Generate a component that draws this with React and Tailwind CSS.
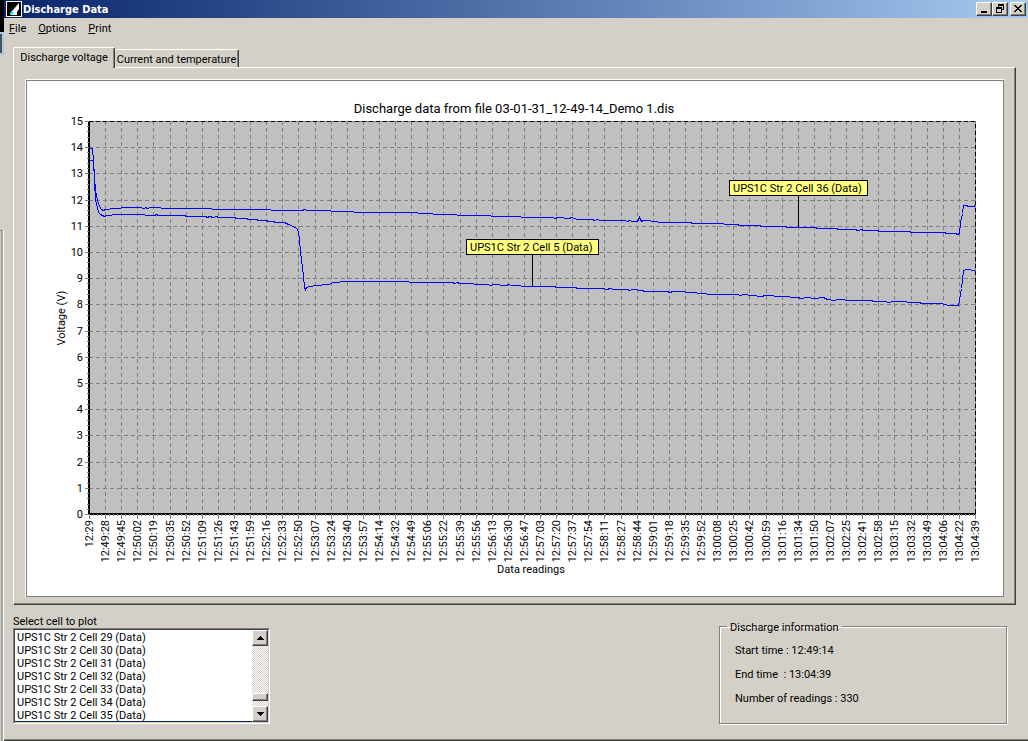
import React from "react";

const TIMES = [
  "12:29", "12:49:28", "12:49:45", "12:50:02", "12:50:19", "12:50:35", "12:50:52", "12:51:09",
  "12:51:26", "12:51:43", "12:51:59", "12:52:16", "12:52:33", "12:52:50", "12:53:07", "12:53:24",
  "12:53:40", "12:53:57", "12:54:14", "12:54:32", "12:54:49", "12:55:06", "12:55:22", "12:55:39",
  "12:55:56", "12:56:13", "12:56:30", "12:56:47", "12:57:03", "12:57:20", "12:57:37", "12:57:54",
  "12:58:11", "12:58:27", "12:58:44", "12:59:01", "12:59:18", "12:59:35", "12:59:52", "13:00:08",
  "13:00:25", "13:00:42", "13:00:59", "13:01:16", "13:01:34", "13:01:50", "13:02:07", "13:02:25",
  "13:02:41", "13:02:58", "13:03:15", "13:03:32", "13:03:49", "13:04:06", "13:04:22", "13:04:39",
];

const LEFT = 89;
const RIGHT = 975;
const TOP = 121;
const BOTTOM = 514;
const xAt = (i) => Math.round(LEFT + ((RIGHT - LEFT) * i) / 55);
const yAt = (v) => Math.round(BOTTOM - ((BOTTOM - TOP) * v) / 15);

const CELL_36 =
  "89,148 92,148 93,160 94,176 95,190 97,200 99,206 101,209 103,210 105,209 109,209 110,208 120,208 121,207 141,207 142,208 144,208 145,207 147,208 150,207 160,207 161,208 211,208 212,209 270,209 271,210 302,210 304,209 307,210 330,210 331,211 375,212 410,212 440,214 456,214 457,215 490,215 491,216 520,216 521,217 552,217 555,218 557,217 569,218 571,217 577,219 592,219 594,220 597,219 600,220 624,220 627,221 629,220 632,221 637,221 639,217 641,221 643,220 657,221 658,222 690,222 692,223 710,223 737,224 739,225 759,225 761,226 785,226 787,227 815,227 817,228 836,228 838,229 854,229 858,230 861,229 863,230 877,230 879,231 909,231 911,232 944,232 946,233 955,233 957,234 959,233 960,222 962,213 963,205 966,205 968,206 973,206 975,205";
const CELL_5 =
  "89,160 93,160 94,180 95,200 97,207 98,212 100,214 102,215 104,216 106,215 111,215 112,214 144,214 145,215 154,215 156,214 158,215 184,215 186,216 205,216 207,217 209,216 213,217 216,216 218,217 234,217 236,218 246,218 248,219 256,219 258,220 266,220 268,221 273,221 275,222 284,222 288,224 293,226 296,228 298,231 299,240 300,250 301,260 303,275 304,287 305,289 306,287 309,286 316,285 328,284 333,282 347,281 405,281 412,282 452,282 454,283 457,282 459,283 487,284 490,285 493,284 506,285 508,284 511,285 513,285 528,286 554,286 556,287 575,287 577,288 603,288 606,289 610,288 613,289 627,289 629,290 632,289 642,290 644,291 667,291 669,292 673,291 695,292 698,293 714,294 737,294 740,295 743,294 761,296 765,295 782,296 797,297 801,298 806,297 815,298 823,297 827,299 834,300 837,299 851,300 871,300 873,301 885,301 888,302 894,301 918,302 922,303 927,303 941,303 944,304 949,305 958,305 960,294 961,288 963,270 966,269 975,270";

function Chart() {
  const minorX = [];
  for (let x = LEFT + 4; x < RIGHT; x += 4) minorX.push(x);
  const minorY = [];
  for (let v = 0; v <= 75; v++) minorY.push(yAt(v / 5));
  return (
    <svg
      viewBox="27 81 976 515"
      role="img"
      aria-label="Discharge voltage chart"
      className="block h-auto w-full bg-white text-[11px]"
    >
      <text x="514" y="113" textAnchor="middle" fontSize="13">
        Discharge data from file 03-01-31_12-49-14_Demo 1.dis
      </text>
      <g shapeRendering="crispEdges">
        <rect x={LEFT} y={TOP} width={RIGHT - LEFT} height={BOTTOM - TOP} fill="#c0c0c0" />
        <g stroke="#808080" strokeDasharray="4 3">
          {TIMES.slice(1, 55).map((t, i) => (
            <path key={t} d={`M${xAt(i + 1) + 0.5} ${TOP}V${BOTTOM}`} />
          ))}
          {Array.from({ length: 14 }, (_, i) => (
            <path key={i} d={`M${LEFT} ${yAt(i + 1) + 0.5}H${RIGHT}`} />
          ))}
        </g>
        <path d={`M${LEFT} ${TOP + 0.5}H${RIGHT + 0.5}V${BOTTOM}`} fill="none" stroke="#808080" />
        <path d={`M${LEFT} ${TOP + 0.5}H${RIGHT + 0.5}V${BOTTOM}`} fill="none" stroke="#000" strokeDasharray="4 3" />
        <path d={`M${LEFT} ${TOP}V${BOTTOM}H${RIGHT + 1}`} fill="none" stroke="#000" strokeWidth="2" />
        <g stroke="#808080">
          {minorY.map((y) => (
            <path key={y} d={`M87 ${y + 0.5}H89`} />
          ))}
          {minorX.map((x) => (
            <path key={x} d={`M${x + 0.5} 514V516`} />
          ))}
          {Array.from({ length: 16 }, (_, i) => (
            <path key={i} d={`M85 ${yAt(i) + 0.5}H89`} />
          ))}
          {TIMES.map((t, i) => (
            <path key={t} d={`M${xAt(i) + 0.5} 514V519`} />
          ))}
        </g>
      </g>
      {Array.from({ length: 16 }, (_, i) => (
        <text key={i} x="83" y={yAt(i) + 4} textAnchor="end">
          {i}
        </text>
      ))}
      {TIMES.map((t, i) => (
        <text key={t} transform={`translate(${xAt(i) + 4} 520) rotate(-90)`} textAnchor="end">
          {t}
        </text>
      ))}
      <text transform="translate(65 318) rotate(-90)" textAnchor="middle">
        Voltage (V)
      </text>
      <text x="531" y="573" textAnchor="middle">
        Data readings
      </text>
      <g transform="translate(0.5 0.5)" fill="none" stroke="#00f" shapeRendering="crispEdges">
        <polyline points={CELL_36} />
        <polyline points={CELL_5} />
      </g>
      <g shapeRendering="crispEdges" stroke="#000">
        <path d="M532.5 255V286M798.5 196V227" />
        <rect x="466.5" y="239.5" width="132" height="15" fill="#ffff80" />
        <rect x="729.5" y="180.5" width="138" height="15" fill="#ffff80" />
      </g>
      <text x="470" y="251">UPS1C Str 2 Cell 5 (Data)</text>
      <text x="733" y="192">UPS1C Str 2 Cell 36 (Data)</text>
    </svg>
  );
}

const RAISED =
  "flex items-center justify-center bg-[#d4d0c8] border border-t-white border-l-white border-b-[#404040] border-r-[#404040] shadow-[inset_-1px_-1px_0_#808080]";

function WindowButton({ label, children }) {
  return (
    <button type="button" aria-label={label} className={`${RAISED} h-[14px] w-4`}>
      <svg width="12" height="10" viewBox="0 0 12 10" shapeRendering="crispEdges" fill="#000">
        {children}
      </svg>
    </button>
  );
}

function TitleBar() {
  return (
    <header className="flex h-[18px] items-center bg-linear-to-r from-[#0a246a] to-[#a6caf0] pr-[2px] pl-[2px]">
      <svg width="16" height="16" viewBox="0 0 16 16" className="shrink-0">
        <rect width="16" height="16" fill="#fff" />
        <rect x="1" y="1" width="14" height="14" fill="#000" />
        <path d="M13 2V8L11 11V14H5L4 13L6 10Z" fill="#fff" />
        <path d="M6 10l2 2-2 2-2-2z" fill="#0ff" />
      </svg>
      <h1 className="flex-1 pt-px pl-px font-['DejaVu_Sans_Condensed','DejaVu_Sans',sans-serif] text-[11px] leading-4 font-bold text-white">
        Discharge Data
      </h1>
      <div className="flex">
        <WindowButton label="Minimize">
          <rect x="3" y="7" width="6" height="2" />
        </WindowButton>
        <WindowButton label="Restore">
          <path d="M4 0h6v6h-2v-1h1v-3h-4v1h-1zM2 3h6v6h-6zM3 5v3h4v-3z" fillRule="evenodd" />
        </WindowButton>
        <div className="ml-[2px] flex">
          <WindowButton label="Close">
            <path d="M2 1h2v1h1v1h2v-1h1v-1h2v1h-1v1h-1v1h-1v1h1v1h1v1h1v1h-2v-1h-1v-1h-2v1h-1v1h-2v-1h1v-1h1v-1h1v-1h-1v-1h-1v-1h-1z" />
          </WindowButton>
        </div>
      </div>
    </header>
  );
}

function CellList() {
  return (
    <div className="flex w-[257px] flex-col">
      <label htmlFor="cells" className="leading-3">
        Select cell to plot
      </label>
      <div className="flex h-24 border border-t-[#808080] border-r-white border-b-white border-l-[#808080]">
        <div className="flex flex-1 border border-t-[#404040] border-r-[#d4d0c8] border-b-[#d4d0c8] border-l-[#404040] bg-white">
          <select
            id="cells"
            size={7}
            className="flex-1 appearance-none overflow-hidden bg-white p-0 text-[11px] leading-[13px] outline-none [scrollbar-width:none]"
          >
            {[29, 30, 31, 32, 33, 34, 35].map((n) => (
              <option key={n} className="h-[13px] min-h-0 px-[2px] pt-px pb-0 leading-[13px]">
                {`UPS1C Str 2 Cell ${n} (Data)`}
              </option>
            ))}
            <option className="h-[13px] min-h-0 bg-[#0a246a] px-[2px] pt-px pb-0 leading-[13px] text-white">
              UPS1C Str 2 Cell 36 (Data)
            </option>
          </select>
          <div className="flex w-4 flex-col bg-[repeating-conic-gradient(#fff_0_25%,#d4d0c8_0_50%)] bg-[length:2px_2px]">
            <button type="button" aria-label="Scroll up" className={`${RAISED} h-4`}>
              <svg width="7" height="4" viewBox="0 0 7 4" shapeRendering="crispEdges">
                <path d="M3 0h1v1h1v1h1v1h1v1H0v-1h1v-1h1v-1h1z" />
              </svg>
            </button>
            <div className="flex-1" />
            <div className={`${RAISED} h-2`} />
            <div className="h-[5px]" />
            <button type="button" aria-label="Scroll down" className={`${RAISED} h-4`}>
              <svg width="7" height="4" viewBox="0 0 7 4" shapeRendering="crispEdges">
                <path d="M0 0h7v1h-1v1h-1v1h-1v1h-1v-1h-1v-1h-1v-1h-1z" />
              </svg>
            </button>
          </div>
        </div>
      </div>
    </div>
  );
}

export default function App() {
  return (
    <div className="flex min-h-screen bg-[#d4d0c8] font-[Roboto,'Liberation_Sans',sans-serif] text-[11px] text-black">
      <div className="flex w-1 shrink-0 flex-col" aria-hidden="true">
        <div className="h-8 bg-black" />
        <div className="h-[23px] border-y-2 border-r-2 border-[#a6caf0] bg-[#505050]" />
        <div className="h-[175px]" />
        <div className="mr-px flex-1 border-t border-r-2 border-t-[#808080] border-r-[#a0a0a0] shadow-[1px_0_0_#fff]" />
      </div>
      <div className="flex min-w-0 flex-1 flex-col border-b border-[#404040] shadow-[inset_0_-1px_0_#808080]">
        <TitleBar />
        <nav className="flex h-[29px] gap-3 pt-1 pl-[5px] leading-[14px]">
          <button type="button" className="h-[14px]"><u>F</u>ile</button>
          <button type="button" className="h-[14px]"><u>O</u>ptions</button>
          <button type="button" className="h-[14px]"><u>P</u>rint</button>
        </nav>

        <div className="mr-3 ml-[9px]">
          <div role="tablist" className="flex h-5 items-end">
            <button
              type="button"
              role="tab"
              aria-selected="true"
              className="z-10 -mb-px h-[21px] w-[102px] rounded-t-[2px] border-t border-r border-l border-t-white border-r-[#404040] border-l-white bg-[#d4d0c8] whitespace-nowrap shadow-[inset_-1px_0_0_#808080]"
            >
              Discharge voltage
            </button>
            <button
              type="button"
              role="tab"
              aria-selected="false"
              className="h-[18px] w-[124px] rounded-t-[2px] border-t border-r border-t-white border-r-[#404040] pt-[2px] whitespace-nowrap shadow-[inset_-1px_0_0_#808080]"
            >
              Current and temperature
            </button>
          </div>
          <section
            role="tabpanel"
            aria-label="Discharge voltage"
            className="border border-t-white border-r-[#404040] border-b-[#404040] border-l-white pt-[11px] pr-[11px] pb-[7px] pl-[11px] shadow-[inset_-1px_-1px_0_#808080]"
          >
            <div className="border-t border-l border-white">
              <div className="border border-[#808080]">
                <Chart />
              </div>
            </div>
          </section>
        </div>

        <div className="mr-[21px] ml-[9px] flex items-start justify-between pt-[11px] pb-[13px]">
          <CellList />
          <fieldset className="mt-[3px] h-[105px] w-72 border border-[#808080] pl-[15px] shadow-[inset_1px_1px_0_#fff,1px_1px_0_#fff]">
            <legend className="-ml-2 px-[3px] pt-[3px] leading-[11px]">Discharge information</legend>
            <dl className="flex flex-col gap-[10px] pt-[11px] leading-[14px] whitespace-pre">
              <div className="flex"><dt>Start time : </dt><dd>12:49:14</dd></div>
              <div className="flex"><dt>End time  : </dt><dd>13:04:39</dd></div>
              <div className="flex"><dt>Number of readings : </dt><dd>330</dd></div>
            </dl>
          </fieldset>
        </div>
      </div>
    </div>
  );
}
